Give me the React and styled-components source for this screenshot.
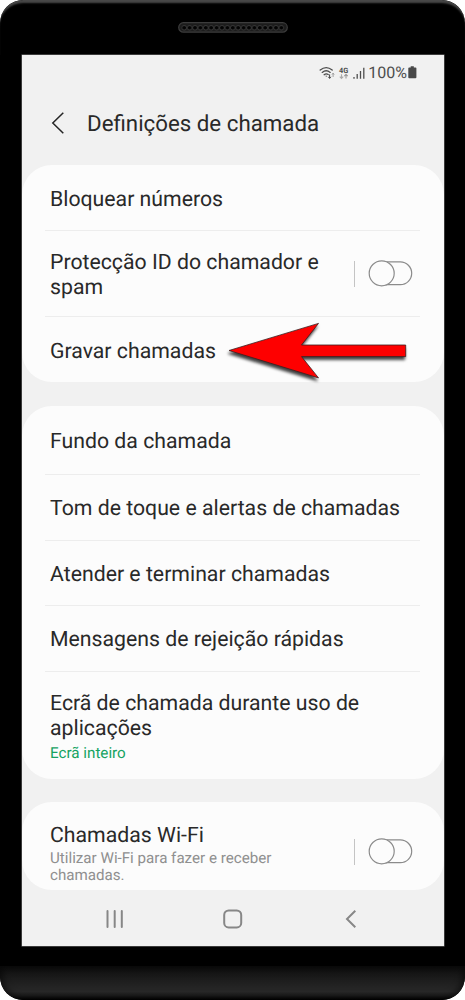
import React from 'react'
import styled, { createGlobalStyle } from 'styled-components'

const calls = [
    { title: 'Bloquear números', height: 66 },
    { title: 'Protecção ID do chamador e spam', height: 86, toggle: true, width: 285 },
    { title: 'Gravar chamadas', height: 65, arrow: true },
]

const options = [
    { title: 'Fundo da chamada', height: 69 },
    { title: 'Tom de toque e alertas de chamadas', height: 66 },
    { title: 'Atender e terminar chamadas', height: 65 },
    { title: 'Mensagens de rejeição rápidas', height: 66 },
    { title: 'Ecrã de chamada durante uso de aplicações', height: 107, width: 330, value: 'Ecrã inteiro' },
]

const wifi = [
    { title: 'Chamadas Wi-Fi', height: 88, toggle: true, width: 240, desc: 'Utilizar Wi-Fi para fazer e receber chamadas.' },
]

const Speaker = () => (
    <SpeakerIcon viewBox="0 0 110 11">
        <defs>
            <pattern id="holes" x="3.5" y="0" width="5.4" height="11" patternUnits="userSpaceOnUse">
                <circle cx="2.7" cy="5.8" r="2.3" fill="#030303" stroke="#444" strokeWidth="0.7" />
            </pattern>
        </defs>
        <rect x="0.7" y="0.7" width="108.6" height="9.4" rx="4.7" fill="#1c1c1c" stroke="#3c3c3c" strokeWidth="1.2" />
        <rect x="3.5" y="2" width="102.6" height="7.4" rx="3.5" fill="url(#holes)" />
    </SpeakerIcon>
)

const StatusIcons = () => (
    <StatusSvg width="48" height="16" viewBox="0 0 48 16">
        <g fill="none" stroke="#4d4d4d" strokeWidth="1.3" strokeLinecap="round">
            <path d="M1.2 5.1Q7.2 0.2 13.2 5.1" />
            <path d="M3.2 7.4Q7.2 4.1 11.2 7.4" />
            <path d="M5.1 9.7Q7.2 8 9.2 9.5" />
        </g>
        <path d="M6.3 10.8h1.8L7.2 12z" fill="#4d4d4d" />
        <path d="M10.6 9.4v3.8M9.3 11.8l1.3 1.6 1.3-1.6" fill="none" stroke="#444" strokeWidth="1" />
        <path d="M14.1 12V8.2M13 9.6l1.1-1.5 1.1 1.5" fill="none" stroke="#999" strokeWidth="0.9" />
        <text x="20" y="7.6" fontFamily="Roboto, sans-serif" fontSize="7.4" fontWeight="700" fill="#4d4d4d">4G</text>
        <path d="M22.5 9.3v4M20.8 11.6l1.7 1.8 1.7-1.8" fill="none" stroke="#aaa" strokeWidth="1.1" />
        <path d="M27 13.6V9.6M25.3 11.2l1.7-1.8 1.7 1.8" fill="none" stroke="#999" strokeWidth="1.1" />
        <path d="M35 12v1.7M38.2 9v4.7M41.5 6v7.7M44.8 2.8v10.9" stroke="#4d4d4d" strokeWidth="1.3" />
    </StatusSvg>
)

const Battery = () => (
    <svg width="9" height="13" viewBox="0 0 9 13">
        <path d="M2.7 0.3h3.1v1.1h1.7q.9 0 .9.9v9q0 .9-.9.9H1.2q-.9 0-.9-.9v-9q0-.9.9-.9h1.5z" fill="#484848" />
    </svg>
)

const Toggle = () => (
    <svg width="45" height="27" viewBox="0 0 45 27">
        <path d="M16 1.9H32.3a11.4 11.4 0 0 1 0 22.8H16" fill="none" stroke="#8b8b8b" strokeWidth="1.2" />
        <circle cx="13.7" cy="13.3" r="12.5" fill="#fcfcfc" stroke="#8b8b8b" strokeWidth="1.2" />
    </svg>
)

const Arrow = () => (
    <ArrowSvg width="190" height="66" viewBox="0 0 190 66">
        <path
            d="M5 33.5L94.5 6.4 77.5 28H181.7V39.6H77.5L94.5 60.9Z"
            fill="#fe0000"
            stroke="#3b2020"
            strokeWidth="0.8"
        />
    </ArrowSvg>
)

const Row = ({ item }) => (
    <RowBox $height={item.height}>
        <Texts $width={item.width} $low={!!item.desc}>
            <Title>{item.title}</Title>
            {item.value && <Value>{item.value}</Value>}
            {item.desc && <Description>{item.desc}</Description>}
        </Texts>
        {item.toggle && (
            <ToggleArea $low={!!item.desc}>
                <Toggle />
            </ToggleArea>
        )}
        {item.arrow && <Arrow />}
    </RowBox>
)

const Section = ({ items }) => (
    <Card>
        {items.map((item) => (
            <Row key={item.title} item={item} />
        ))}
    </Card>
)

const App = () => {
    return (
        <>
            <GlobalStyle />
            <Phone>
                <TopBezel>
                    <Speaker />
                </TopBezel>
                <Screen>
                    <StatusBar>
                        <StatusIcons />
                        <Percent>100%</Percent>
                        <Battery />
                    </StatusBar>
                    <Header>
                        <svg width="14" height="24" viewBox="0 0 14 24">
                            <path d="M12.3 0.8L1.8 11 12.3 21.2" fill="none" stroke="#252525" strokeWidth="1.5" />
                        </svg>
                        <Heading>Definições de chamada</Heading>
                    </Header>
                    <List>
                        <Section items={calls} />
                        <Section items={options} />
                        <Section items={wifi} />
                    </List>
                    <NavBar>
                        <svg width="18" height="18" viewBox="0 0 18 18">
                            <path d="M1.5 1v16M8.7 1v16M15.8 1v16" stroke="#878787" strokeWidth="2" strokeLinecap="round" />
                        </svg>
                        <svg width="20" height="20" viewBox="0 0 20 20">
                            <rect x="1.2" y="1.4" width="17" height="17" rx="4.5" fill="none" stroke="#878787" strokeWidth="2" />
                        </svg>
                        <svg width="12" height="18" viewBox="0 0 12 18">
                            <path d="M10.3 0.8L2 9l8.3 8.2" fill="none" stroke="#878787" strokeWidth="2" />
                        </svg>
                    </NavBar>
                </Screen>
                <Chin />
            </Phone>
        </>
    )
}

export default App

const GlobalStyle = createGlobalStyle`
    body {
        margin: 0;
        background: #fff;
        font-family: Roboto, sans-serif;
        text-rendering: geometricPrecision;
    }

    svg {
        display: block;
        flex-shrink: 0;
    }
`

const Phone = styled.div`
    width: 465px;
    height: 1000px;
    display: flex;
    flex-direction: column;
    box-sizing: border-box;
    background: #000;
    border-radius: 23px;
    overflow: hidden;
`

const TopBezel = styled.div`
    height: 55px;
    flex-shrink: 0;
    display: flex;
    justify-content: center;
    box-sizing: border-box;
    padding-top: 22px;
    border-radius: 23px 23px 0 0;
    box-shadow: inset 0 4px 2px -1px #484848;
`

const SpeakerIcon = styled.svg`
    width: 110px;
    height: 11px;
`

const Screen = styled.div`
    width: 422px;
    height: 891px;
    margin-left: 22px;
    flex-shrink: 0;
    display: flex;
    flex-direction: column;
    background: #f1f1f1;
    box-shadow: 0 0 0 0.5px #777;
`

const StatusBar = styled.div`
    height: 35px;
    display: flex;
    align-items: center;
    justify-content: flex-end;
    padding-right: 27px;
`

const StatusSvg = styled.svg`
    margin-right: 1.5px;
`

const Percent = styled.div`
    font-size: 16px;
    color: #4d4d4d;
    margin-right: 1px;
`

const Header = styled.div`
    height: 67px;
    display: flex;
    align-items: center;
    gap: 22px;
    padding-left: 29px;
    margin-bottom: 8px;
`

const Heading = styled.h1`
    margin: 0;
    font-size: 22.3px;
    font-weight: 400;
    color: #292929;
`

const List = styled.div`
    display: flex;
    flex-direction: column;
    gap: 23.5px;
`

const Card = styled.div`
    background: #fcfcfc;
    border-radius: 30px;
    padding: 0 24px 0 23px;
`

const RowBox = styled.div`
    position: relative;
    height: ${(props) => props.$height}px;
    box-sizing: border-box;
    display: flex;
    align-items: center;
    justify-content: space-between;
    padding-left: 5px;

    &:not(:last-child) {
        border-bottom: 1px solid #ededed;
    }
`

const Texts = styled.div`
    width: ${(props) => (props.$width ? props.$width + 'px' : 'auto')};
    white-space: ${(props) => (props.$width ? 'normal' : 'nowrap')};
    padding-top: ${(props) => (props.$low ? 17 : 5)}px;
`

const Title = styled.div`
    font-size: 21.25px;
    line-height: 24.6px;
    color: #292929;
`

const Value = styled.div`
    font-size: 15.2px;
    line-height: 20px;
    padding-top: 2px;
    color: #16a362;
`

const Description = styled.div`
    font-size: 15.15px;
    line-height: 17.6px;
    padding-top: 1px;
    color: #8f8f8f;
`

const ToggleArea = styled.div`
    height: 26px;
    display: flex;
    align-items: center;
    border-left: 1px solid #c4c4c4;
    padding-left: 13px;
    margin-right: 7px;
    margin-top: ${(props) => (props.$low ? 11 : 0)}px;
`

const ArrowSvg = styled.svg`
    position: absolute;
    left: 179px;
    top: 0;
    filter: drop-shadow(-1px 3px 1.5px rgba(0, 0, 0, 0.75));
`

const NavBar = styled.div`
    flex: 1;
    display: flex;
    align-items: center;
    justify-content: space-between;
    padding: 1px 87px 0 84px;

    svg:nth-child(2) {
        margin-right: 4px;
    }
`

const Chin = styled.div`
    height: 34px;
    margin-top: 20px;
    flex-shrink: 0;
    border-radius: 0 0 23px 23px;
    background: linear-gradient(#0f0f0f, #282828 75%, #1c1c1c 88%, #000);
    box-shadow: inset 0 0 6px 3px rgba(0, 0, 0, 0.5);
`
